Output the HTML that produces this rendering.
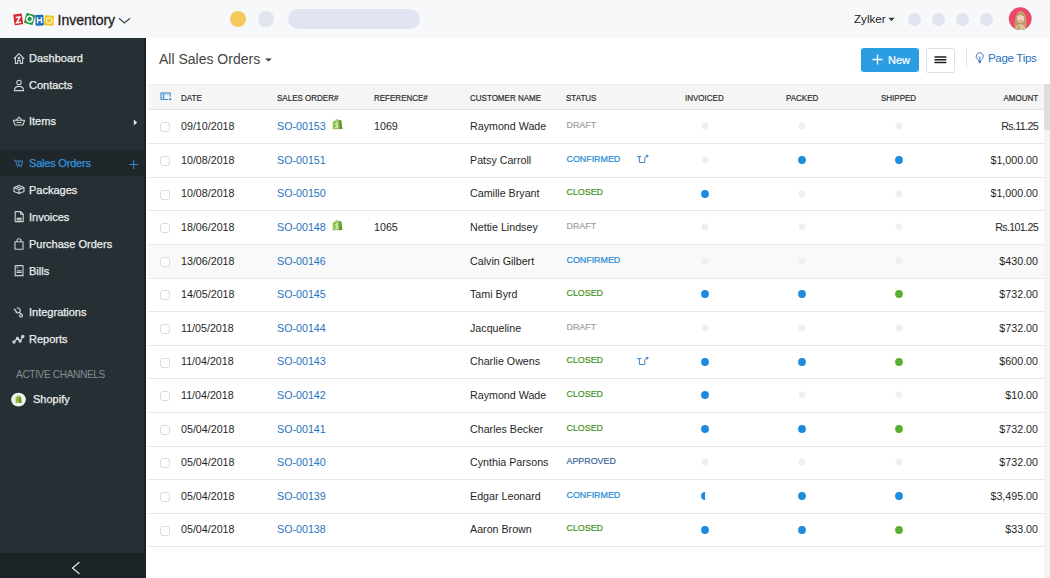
<!DOCTYPE html>
<html><head><meta charset="utf-8">
<style>
*{box-sizing:border-box;margin:0;padding:0}
html,body{width:1050px;height:578px;overflow:hidden;background:#fff;font-family:"Liberation Sans",sans-serif;color:#222}
.abs{position:absolute}
#top{position:absolute;left:0;top:0;width:1050px;height:38px;background:#f7f8fa}
#side{position:absolute;left:0;top:38px;width:146px;height:540px;background:#263034}
.nav{position:absolute;left:29px;font-size:11px;color:#eceef0;white-space:nowrap;line-height:13px;-webkit-text-stroke:0.25px #eceef0;transform:translateY(-0.1px)}
.hdr{position:absolute;top:84px;left:148px;width:897px;height:26px;background:#f5f5f6;border-top:1px solid #ececec;border-bottom:1px solid #e3e3e3}
.th{position:absolute;top:93px;font-size:8.8px;color:#2e2e2e;white-space:nowrap;line-height:10px;transform:scaleX(0.91);-webkit-text-stroke:0.2px #2e2e2e}
.row{position:absolute;left:148px;width:897px;height:33.6px;border-bottom:1px solid #e9e9e9}
.c{position:absolute;font-size:10.7px;white-space:nowrap;line-height:13px;color:#1f1f1f}
.lnk{color:#2773c0}
.st{font-size:8.9px;line-height:10px;-webkit-text-stroke:0.2px currentColor}
.dot{position:absolute;width:7.6px;height:7.6px;border-radius:50%}
.g{background:#f0f0f0;transform:scale(0.9)}
.b{background:#1a8cdb}
.gr{background:#5aae33}
.cb{position:absolute;left:160px;width:10px;height:10px;border:1px solid #dcdcdc;border-radius:3px;background:#fff}
</style></head><body>

<div id="top"></div>
<svg class="abs" style="left:0;top:0" width="60" height="32" viewBox="0 0 60 32">
 <g transform="rotate(-8 18.2 19.4)"><rect x="13.9" y="13.9" width="8.6" height="11" rx="0.8" fill="#d9262c"/><path d="M16 17.2 H20.2 L16.2 22.6 H20.5" fill="none" stroke="#fff" stroke-width="1.5"/></g>
 <g transform="rotate(15 29.6 19)"><rect x="25.1" y="13.8" width="9" height="10.4" rx="0.8" fill="#279a48"/><circle cx="29.6" cy="19" r="2.9" fill="none" stroke="#fff" stroke-width="1.4"/></g>
 <g transform="rotate(-3 39.5 20.2)"><rect x="35.4" y="14.8" width="8.2" height="10.8" rx="0.8" fill="#1f6fba"/><path d="M37.5 17.3 V23.2 M41.5 17.3 V23.2 M37.5 20.2 H41.5" fill="none" stroke="#fff" stroke-width="1.4"/></g>
 <g transform="rotate(4 49.1 20.5)"><rect x="44.5" y="15.5" width="9.2" height="10" rx="0.8" fill="#f2c01f"/><circle cx="49.1" cy="20.5" r="2.8" fill="none" stroke="#fbe9a6" stroke-width="1.4"/></g>
</svg>
<div class="abs" style="left:57.5px;top:11.7px;font-size:14px;color:#222;line-height:17px;-webkit-text-stroke:0.3px #222">Inventory</div>
<svg class="abs" style="left:118px;top:17px" width="13" height="8" viewBox="0 0 13 8"><path d="M1 1.2 L6.5 6 L12 1.2" fill="none" stroke="#444" stroke-width="1.2"/></svg>
<div class="abs" style="left:230px;top:11px;width:16px;height:16px;border-radius:50%;background:#f5c85c"></div>
<div class="abs" style="left:258px;top:11px;width:16px;height:16px;border-radius:50%;background:#e2e5ef"></div>
<div class="abs" style="left:288px;top:9px;width:132px;height:20px;border-radius:10px;background:#e1e5f1"></div>
<div class="abs" style="left:854px;top:12px;font-size:11.6px;color:#222;line-height:14px">Zylker</div>
<svg class="abs" style="left:888px;top:17px" width="7" height="5" viewBox="0 0 7 5"><path d="M0.5 0.8 H6.5 L3.5 4.2 Z" fill="#333"/></svg>
<div class="abs" style="left:907.5px;top:13px;width:13px;height:13px;border-radius:50%;background:#e1e4ee"></div>
<div class="abs" style="left:931.5px;top:13px;width:13px;height:13px;border-radius:50%;background:#e1e4ee"></div>
<div class="abs" style="left:955.5px;top:13px;width:13px;height:13px;border-radius:50%;background:#e1e4ee"></div>
<div class="abs" style="left:979.5px;top:13px;width:13px;height:13px;border-radius:50%;background:#e1e4ee"></div>
<svg class="abs" style="left:1008px;top:7px" width="24" height="24" viewBox="0 0 24 24">
 <defs><clipPath id="av"><circle cx="12.2" cy="11.7" r="11.4"/></clipPath></defs>
 <circle cx="12.2" cy="11.7" r="11.4" fill="#ec4869"/>
 <g clip-path="url(#av)">
  <path d="M6.5 24 C6 17 7 4.5 12.5 4 C18 4 19 12 18.5 18 L17 24 Z" fill="#c49a6c"/>
  <ellipse cx="12.6" cy="11" rx="3.5" ry="4.6" fill="#f0d3bf"/>
  <path d="M9.6 8.5 C10.5 6.8 14.5 6.3 16 9" fill="none" stroke="#b58a5c" stroke-width="1.2"/>
  <path d="M10.6 13.8 H14.2" stroke="#a86e5a" stroke-width="0.7"/>
  <path d="M7 24 C7.5 19 10 17.2 12.5 17.2 C15 17.2 17.5 19 18 24 Z" fill="#d9c29a"/>
  <path d="M8.5 24 L10.5 18.5 L12 21 Z" fill="#b79966"/>
 </g>
</svg>
<div class="abs" style="left:861px;top:48px;width:58px;height:24px;border-radius:3px;background:#2b9de3"></div>
<svg class="abs" style="left:872px;top:54px" width="11" height="11" viewBox="0 0 11 11"><path d="M5.5 0.5 V10.5 M0.5 5.5 H10.5" stroke="#fff" stroke-width="1.3"/></svg>
<div class="abs" style="left:888px;top:52.5px;font-size:11px;color:#fff;line-height:14px;-webkit-text-stroke:0.2px #fff">New</div>
<div class="abs" style="left:925.5px;top:48px;width:29.5px;height:24.5px;border-radius:2px;background:#fff;border:1px solid #e0e0e0"></div>
<svg class="abs" style="left:934px;top:55px" width="13" height="10" viewBox="0 0 13 10"><path d="M1 1.9 H11.8 M1 4.8 H11.8 M1 7.6 H11.8" stroke="#1c1c1c" stroke-width="1.5" stroke-linecap="round"/></svg>
<div class="abs" style="left:966px;top:48px;width:1px;height:19px;background:#e2e2e2"></div>
<svg class="abs" style="left:970px;top:48px" width="20" height="20" viewBox="970 48 20 20" fill="none" stroke="#4677bd" stroke-width="1"><path d="M978.1 60.2 C977.6 59 976.2 58.3 976.2 56.3 C976.2 54.2 977.8 52.8 979.7 52.8 C981.6 52.8 983.2 54.2 983.2 56.3 C983.2 58.3 981.8 59 981.3 60.2 Z"/><path d="M978.4 61.6 H981 M978.8 62.7 H980.6" stroke-width="1.1"/><path d="M978.6 56.6 L979.7 58 L980.8 56.6 M979.7 58 V60" stroke-width="0.8"/></svg>
<div class="abs" style="left:988px;top:51px;font-size:11.5px;color:#2a73bb;line-height:14px;letter-spacing:-0.3px">Page Tips</div>
<div class="abs" style="left:159px;top:50.6px;font-size:14px;color:#454545;line-height:17px">All Sales Orders</div>
<svg class="abs" style="left:265px;top:58px" width="7" height="4" viewBox="0 0 7 4"><path d="M0.3 0.5 H6.7 L3.5 3.6 Z" fill="#333"/></svg>

<div id="side"></div>
<div class="abs" style="left:144px;top:38px;width:2px;height:540px;background:#1b2225"></div>
<div class="abs" style="left:0;top:150px;width:146px;height:26px;background:#1f272b"></div>
<div class="abs" style="left:0;top:553px;width:146px;height:25px;background:#1c2327"></div>
<svg class="abs" style="left:0;top:38px" width="146" height="540" viewBox="0 38 146 540" fill="none" stroke="#cdd1d4" stroke-width="1.1" stroke-linejoin="round" stroke-linecap="round">
 <!-- home -->
 <path d="M14.2 58.5 L19 53.6 L23.8 58.5 M15.4 57.5 V63.4 H17.7 V60.4 H20.3 V63.4 H22.6 V57.5"/>
 <circle cx="19" cy="58" r="0.8"/>
 <!-- contacts -->
 <circle cx="19" cy="82.5" r="2.2"/>
 <path d="M14.4 90.6 C14.4 88 16.4 86.4 19 86.4 C21.6 86.4 23.6 88 23.6 90.6 Z"/>
 <!-- items basket -->
 <path d="M16 120.3 L19 117.2 L22 120.3"/>
 <path d="M13.4 120.3 H24.6 L23 125 H15 Z"/>
 <path d="M17 122.5 H21"/>
 <!-- packages box -->
 <path d="M19 185.4 L24 187.6 V191.4 L19 193.6 L14 191.4 V187.6 Z M14 187.6 L19 189.8 L24 187.6 M19 189.8 V193.6 M16.5 186.5 L21.5 188.7"/>
 <!-- invoices -->
 <path d="M15.2 211.6 H20.6 L23.2 214.2 V221.6 H15.2 Z M20.6 211.6 V214.2 H23.2"/>
 <path d="M17 218.3 H21.3 M17 219.8 H21.3" stroke-width="1.2"/>
 <!-- purchase bag -->
 <path d="M15 241.8 H23 V249.3 H15 Z M17 241.8 V240 C17 238.3 21 238.3 21 240 V241.8"/>
 <!-- bills -->
 <path d="M15.2 265.6 H23 V276 L21.7 275.2 L20.4 276 L19.1 275.2 L17.8 276 L16.5 275.2 L15.2 276 Z"/>
 <path d="M17 267.8 H18 M17 270.7 H21.2 M17 272.4 H21.2"/>
 <!-- integrations -->
 <path d="M14.4 309.3 L16.5 311.7" stroke-width="1.3"/>
 <path d="M17.2 307.8 C19.3 308 20.7 309.6 20.1 311.3 C19.6 312.9 17.2 313.4 16 312" stroke-width="1.2"/>
 <path d="M19.3 312.6 C21 313.4 22.7 314.3 22.5 315.9 C22.3 317.2 20.5 317.3 19.8 316.3 C19.4 315.7 19.6 315.2 20 315" stroke-width="1.2"/>
 <!-- reports -->
 <path d="M14 342 L17.4 338.3 L20.1 341 L22.8 336.6" stroke-width="1.2"/>
 <circle cx="14" cy="342" r="1.1" fill="#d9dcdf"/><circle cx="17.4" cy="338.3" r="1.1" fill="#d9dcdf"/><circle cx="20.1" cy="341" r="1.1" fill="#d9dcdf"/><circle cx="22.8" cy="336.6" r="1.2" fill="#d9dcdf"/>
 <!-- collapse arrow -->
 <path d="M79 562.5 L72.5 568 L79 573.5" stroke="#e6e8ea" stroke-width="1.2"/>
</svg>
<svg class="abs" style="left:13px;top:159px" width="11" height="9" viewBox="0 0 11 9" fill="none" stroke="#3b84c6" stroke-width="1" stroke-linejoin="round" stroke-linecap="round">
 <path d="M0.8 0.9 L2.6 2 L4.2 6.6 H8.4 L9.6 2 H2.6 M5.6 2.2 L6 6.4 M4.5 7.5 V7.9 M8 7.5 V7.9"/>
</svg>
<div class="nav" style="top:52px">Dashboard</div>
<div class="nav" style="top:79px">Contacts</div>
<div class="nav" style="top:115px">Items</div>
<svg class="abs" style="left:133px;top:119px" width="5" height="7" viewBox="0 0 5 7"><path d="M0.8 0.6 L4.2 3.5 L0.8 6.4 Z" fill="#e0e2e4"/></svg>
<div class="nav" style="top:157px;color:#3294de;-webkit-text-stroke:0.25px #3294de;letter-spacing:-0.2px">Sales Orders</div>
<svg class="abs" style="left:128.5px;top:160px" width="10" height="9" viewBox="0 0 10 9"><path d="M4.7 0 V9 M0.2 4.5 H9.2" stroke="#3a93dc" stroke-width="0.9"/></svg>
<div class="nav" style="top:184px">Packages</div>
<div class="nav" style="top:211px">Invoices</div>
<div class="nav" style="top:238px">Purchase Orders</div>
<div class="nav" style="top:265px">Bills</div>
<div class="nav" style="top:306px">Integrations</div>
<div class="nav" style="top:333px">Reports</div>
<div class="abs" style="left:16px;top:368.5px;font-size:10.1px;color:#868b90;line-height:12px;white-space:nowrap;letter-spacing:-0.35px">ACTIVE CHANNELS</div>
<svg class="abs" style="left:10px;top:392px" width="17" height="16" viewBox="0 0 17 16">
 <ellipse cx="8.5" cy="7.6" rx="7.4" ry="6.9" fill="#eef3ea"/>
 <path d="M5.6 5 L10.8 4.6 L11.6 10.8 L5.8 11 Z" fill="#93b541"/>
 <path d="M9 4.8 L10.8 4.6 L11.6 10.8 L9.4 10.9 Z" fill="#6f9330"/>
 <path d="M7 4.9 C7 3.4 9.3 3.2 9.4 4.7" fill="none" stroke="#8aa844" stroke-width="0.8"/>
</svg>
<div class="nav" style="left:33px;top:393.3px">Shopify</div>

<div class="hdr"></div>
<svg class="abs" style="left:157px;top:88px" width="18" height="16" viewBox="157 88 18 16"><rect x="160.6" y="92.6" width="9.8" height="7" fill="#c2dbf2"/><rect x="164.4" y="95.4" width="5.2" height="3.4" fill="#f4f8fc"/><path d="M160.9 92.8 V99.5 H168.2 M163.7 93.2 V99.3 M160.9 92.9 H170.3 V96.8" fill="none" stroke="#4d8cc8" stroke-width="1"/><circle cx="170.2" cy="99.2" r="1" fill="#3f6f9c"/></svg>
<div class="th" style="left:181px;transform-origin:0 0">DATE</div>
<div class="th" style="left:277px;transform-origin:0 0">SALES ORDER#</div>
<div class="th" style="left:374px;transform-origin:0 0">REFERENCE#</div>
<div class="th" style="left:470px;transform-origin:0 0">CUSTOMER NAME</div>
<div class="th" style="left:566px;transform-origin:0 0">STATUS</div>
<div class="th" style="left:685px;transform-origin:0 0">INVOICED</div>
<div class="th" style="left:786px;transform-origin:0 0">PACKED</div>
<div class="th" style="left:881px;transform-origin:0 0">SHIPPED</div>
<div class="th" style="right:12px;transform-origin:100% 0">AMOUNT</div>
<div class="row" style="top:110.60px;"></div>
<div class="cb" style="top:122.40px"></div>
<div class="c" style="left:181px;top:120.20px">09/10/2018</div>
<div class="c lnk" style="left:277px;top:120.20px">SO-00153</div>
<svg class="abs" style="left:331.5px;top:118.80px" width="11" height="11" viewBox="0 0 11 11"><path d="M0.8 3.2 C0.8 1.9 2 1.5 3 1.4 L7.4 0.9 C8.6 0.9 9.2 1.4 9.4 2.4 L10.4 10 L0.7 10.3 Z" fill="#93c24f"/><path d="M7 1 L7.4 0.9 C8.6 0.9 9.2 1.4 9.4 2.4 L10.4 10 L7.3 10.2 Z" fill="#5f9c37"/><path d="M3.7 0.9 C4.4 0.1 5.6 0.1 6.2 1" fill="none" stroke="#7aa84a" stroke-width="0.8"/><path d="M6 4.1 C5 3.6 3.6 4 3.9 5.1 C4.2 6 5.9 6.2 5.6 7.6 C5.3 8.6 4 8.6 3.3 8.1" fill="none" stroke="#e9f5d8" stroke-width="1.1"/></svg>
<div class="c" style="left:374px;top:120.20px">1069</div>
<div class="c" style="left:470px;top:120.20px">Raymond Wade</div>
<div class="c st" style="left:566.5px;top:120.10px;color:#a0a0a0">DRAFT</div>
<svg class="abs" style="left:700.00px;top:121.40px" width="10" height="10" viewBox="0 0 10 10"><circle cx="5" cy="5" r="3.4" fill="#efefef"/></svg>
<svg class="abs" style="left:796.80px;top:121.40px" width="10" height="10" viewBox="0 0 10 10"><circle cx="5" cy="5" r="3.4" fill="#efefef"/></svg>
<svg class="abs" style="left:893.80px;top:121.40px" width="10" height="10" viewBox="0 0 10 10"><circle cx="5" cy="5" r="3.4" fill="#efefef"/></svg>
<div class="c" style="right:12px;top:120.20px;letter-spacing:-0.65px">Rs.11.25</div>
<div class="row" style="top:144.20px;"></div>
<div class="cb" style="top:156.00px"></div>
<div class="c" style="left:181px;top:153.80px">10/08/2018</div>
<div class="c lnk" style="left:277px;top:153.80px">SO-00151</div>
<div class="c" style="left:470px;top:153.80px">Patsy Carroll</div>
<div class="c st" style="left:566.5px;top:153.70px;color:#1f8bd6">CONFIRMED</div>
<svg class="abs" style="left:636px;top:154.20px" width="14" height="10" viewBox="0 0 14 10"><path d="M1 2.6 H5.4 M3.4 2.6 V8.5 H8.8 V4.6 C8.8 3.2 9.6 2.4 10.8 2.1" fill="none" stroke="#3f82c2" stroke-width="1"/><path d="M10 0.5 L12.9 1.4 L10.9 3.9 Z" fill="#3f82c2"/></svg>
<svg class="abs" style="left:700.00px;top:155.00px" width="10" height="10" viewBox="0 0 10 10"><circle cx="5" cy="5" r="3.4" fill="#efefef"/></svg>
<svg class="abs" style="left:796.80px;top:155.00px" width="10" height="10" viewBox="0 0 10 10"><circle cx="5" cy="5" r="3.9" fill="#1a8cdb"/></svg>
<svg class="abs" style="left:893.80px;top:155.00px" width="10" height="10" viewBox="0 0 10 10"><circle cx="5" cy="5" r="3.9" fill="#1a8cdb"/></svg>
<div class="c" style="right:12px;top:153.80px;">$1,000.00</div>
<div class="row" style="top:177.80px;"></div>
<div class="cb" style="top:189.60px"></div>
<div class="c" style="left:181px;top:187.40px">10/08/2018</div>
<div class="c lnk" style="left:277px;top:187.40px">SO-00150</div>
<div class="c" style="left:470px;top:187.40px">Camille Bryant</div>
<div class="c st" style="left:566.5px;top:187.30px;color:#459428">CLOSED</div>
<svg class="abs" style="left:700.00px;top:188.60px" width="10" height="10" viewBox="0 0 10 10"><circle cx="5" cy="5" r="3.9" fill="#1a8cdb"/></svg>
<svg class="abs" style="left:796.80px;top:188.60px" width="10" height="10" viewBox="0 0 10 10"><circle cx="5" cy="5" r="3.4" fill="#efefef"/></svg>
<svg class="abs" style="left:893.80px;top:188.60px" width="10" height="10" viewBox="0 0 10 10"><circle cx="5" cy="5" r="3.4" fill="#efefef"/></svg>
<div class="c" style="right:12px;top:187.40px;">$1,000.00</div>
<div class="row" style="top:211.40px;"></div>
<div class="cb" style="top:223.20px"></div>
<div class="c" style="left:181px;top:221.00px">18/06/2018</div>
<div class="c lnk" style="left:277px;top:221.00px">SO-00148</div>
<svg class="abs" style="left:331.5px;top:219.60px" width="11" height="11" viewBox="0 0 11 11"><path d="M0.8 3.2 C0.8 1.9 2 1.5 3 1.4 L7.4 0.9 C8.6 0.9 9.2 1.4 9.4 2.4 L10.4 10 L0.7 10.3 Z" fill="#93c24f"/><path d="M7 1 L7.4 0.9 C8.6 0.9 9.2 1.4 9.4 2.4 L10.4 10 L7.3 10.2 Z" fill="#5f9c37"/><path d="M3.7 0.9 C4.4 0.1 5.6 0.1 6.2 1" fill="none" stroke="#7aa84a" stroke-width="0.8"/><path d="M6 4.1 C5 3.6 3.6 4 3.9 5.1 C4.2 6 5.9 6.2 5.6 7.6 C5.3 8.6 4 8.6 3.3 8.1" fill="none" stroke="#e9f5d8" stroke-width="1.1"/></svg>
<div class="c" style="left:374px;top:221.00px">1065</div>
<div class="c" style="left:470px;top:221.00px">Nettie Lindsey</div>
<div class="c st" style="left:566.5px;top:220.90px;color:#a0a0a0">DRAFT</div>
<svg class="abs" style="left:700.00px;top:222.20px" width="10" height="10" viewBox="0 0 10 10"><circle cx="5" cy="5" r="3.4" fill="#efefef"/></svg>
<svg class="abs" style="left:796.80px;top:222.20px" width="10" height="10" viewBox="0 0 10 10"><circle cx="5" cy="5" r="3.4" fill="#efefef"/></svg>
<svg class="abs" style="left:893.80px;top:222.20px" width="10" height="10" viewBox="0 0 10 10"><circle cx="5" cy="5" r="3.4" fill="#efefef"/></svg>
<div class="c" style="right:12px;top:221.00px;letter-spacing:-0.65px">Rs.101.25</div>
<div class="row" style="top:245.00px;background:#f9f9f9;"></div>
<div class="cb" style="top:256.80px"></div>
<div class="c" style="left:181px;top:254.60px">13/06/2018</div>
<div class="c lnk" style="left:277px;top:254.60px">SO-00146</div>
<div class="c" style="left:470px;top:254.60px">Calvin Gilbert</div>
<div class="c st" style="left:566.5px;top:254.50px;color:#1f8bd6">CONFIRMED</div>
<svg class="abs" style="left:700.00px;top:255.80px" width="10" height="10" viewBox="0 0 10 10"><circle cx="5" cy="5" r="3.4" fill="#efefef"/></svg>
<svg class="abs" style="left:796.80px;top:255.80px" width="10" height="10" viewBox="0 0 10 10"><circle cx="5" cy="5" r="3.4" fill="#efefef"/></svg>
<svg class="abs" style="left:893.80px;top:255.80px" width="10" height="10" viewBox="0 0 10 10"><circle cx="5" cy="5" r="3.4" fill="#efefef"/></svg>
<div class="c" style="right:12px;top:254.60px;">$430.00</div>
<div class="row" style="top:278.60px;"></div>
<div class="cb" style="top:290.40px"></div>
<div class="c" style="left:181px;top:288.20px">14/05/2018</div>
<div class="c lnk" style="left:277px;top:288.20px">SO-00145</div>
<div class="c" style="left:470px;top:288.20px">Tami Byrd</div>
<div class="c st" style="left:566.5px;top:288.10px;color:#459428">CLOSED</div>
<svg class="abs" style="left:700.00px;top:289.40px" width="10" height="10" viewBox="0 0 10 10"><circle cx="5" cy="5" r="3.9" fill="#1a8cdb"/></svg>
<svg class="abs" style="left:796.80px;top:289.40px" width="10" height="10" viewBox="0 0 10 10"><circle cx="5" cy="5" r="3.9" fill="#1a8cdb"/></svg>
<svg class="abs" style="left:893.80px;top:289.40px" width="10" height="10" viewBox="0 0 10 10"><circle cx="5" cy="5" r="3.9" fill="#5aae33"/></svg>
<div class="c" style="right:12px;top:288.20px;">$732.00</div>
<div class="row" style="top:312.20px;"></div>
<div class="cb" style="top:324.00px"></div>
<div class="c" style="left:181px;top:321.80px">11/05/2018</div>
<div class="c lnk" style="left:277px;top:321.80px">SO-00144</div>
<div class="c" style="left:470px;top:321.80px">Jacqueline</div>
<div class="c st" style="left:566.5px;top:321.70px;color:#a0a0a0">DRAFT</div>
<svg class="abs" style="left:700.00px;top:323.00px" width="10" height="10" viewBox="0 0 10 10"><circle cx="5" cy="5" r="3.4" fill="#efefef"/></svg>
<svg class="abs" style="left:796.80px;top:323.00px" width="10" height="10" viewBox="0 0 10 10"><circle cx="5" cy="5" r="3.4" fill="#efefef"/></svg>
<svg class="abs" style="left:893.80px;top:323.00px" width="10" height="10" viewBox="0 0 10 10"><circle cx="5" cy="5" r="3.4" fill="#efefef"/></svg>
<div class="c" style="right:12px;top:321.80px;">$732.00</div>
<div class="row" style="top:345.80px;"></div>
<div class="cb" style="top:357.60px"></div>
<div class="c" style="left:181px;top:355.40px">11/04/2018</div>
<div class="c lnk" style="left:277px;top:355.40px">SO-00143</div>
<div class="c" style="left:470px;top:355.40px">Charlie Owens</div>
<div class="c st" style="left:566.5px;top:355.30px;color:#459428">CLOSED</div>
<svg class="abs" style="left:636px;top:355.80px" width="14" height="10" viewBox="0 0 14 10"><path d="M1 2.6 H5.4 M3.4 2.6 V8.5 H8.8 V4.6 C8.8 3.2 9.6 2.4 10.8 2.1" fill="none" stroke="#3f82c2" stroke-width="1"/><path d="M10 0.5 L12.9 1.4 L10.9 3.9 Z" fill="#3f82c2"/></svg>
<svg class="abs" style="left:700.00px;top:356.60px" width="10" height="10" viewBox="0 0 10 10"><circle cx="5" cy="5" r="3.9" fill="#1a8cdb"/></svg>
<svg class="abs" style="left:796.80px;top:356.60px" width="10" height="10" viewBox="0 0 10 10"><circle cx="5" cy="5" r="3.9" fill="#1a8cdb"/></svg>
<svg class="abs" style="left:893.80px;top:356.60px" width="10" height="10" viewBox="0 0 10 10"><circle cx="5" cy="5" r="3.9" fill="#5aae33"/></svg>
<div class="c" style="right:12px;top:355.40px;">$600.00</div>
<div class="row" style="top:379.40px;"></div>
<div class="cb" style="top:391.20px"></div>
<div class="c" style="left:181px;top:389.00px">11/04/2018</div>
<div class="c lnk" style="left:277px;top:389.00px">SO-00142</div>
<div class="c" style="left:470px;top:389.00px">Raymond Wade</div>
<div class="c st" style="left:566.5px;top:388.90px;color:#459428">CLOSED</div>
<svg class="abs" style="left:700.00px;top:390.20px" width="10" height="10" viewBox="0 0 10 10"><circle cx="5" cy="5" r="3.9" fill="#1a8cdb"/></svg>
<svg class="abs" style="left:796.80px;top:390.20px" width="10" height="10" viewBox="0 0 10 10"><circle cx="5" cy="5" r="3.4" fill="#efefef"/></svg>
<svg class="abs" style="left:893.80px;top:390.20px" width="10" height="10" viewBox="0 0 10 10"><circle cx="5" cy="5" r="3.4" fill="#efefef"/></svg>
<div class="c" style="right:12px;top:389.00px;">$10.00</div>
<div class="row" style="top:413.00px;"></div>
<div class="cb" style="top:424.80px"></div>
<div class="c" style="left:181px;top:422.60px">05/04/2018</div>
<div class="c lnk" style="left:277px;top:422.60px">SO-00141</div>
<div class="c" style="left:470px;top:422.60px">Charles Becker</div>
<div class="c st" style="left:566.5px;top:422.50px;color:#459428">CLOSED</div>
<svg class="abs" style="left:700.00px;top:423.80px" width="10" height="10" viewBox="0 0 10 10"><circle cx="5" cy="5" r="3.9" fill="#1a8cdb"/></svg>
<svg class="abs" style="left:796.80px;top:423.80px" width="10" height="10" viewBox="0 0 10 10"><circle cx="5" cy="5" r="3.9" fill="#1a8cdb"/></svg>
<svg class="abs" style="left:893.80px;top:423.80px" width="10" height="10" viewBox="0 0 10 10"><circle cx="5" cy="5" r="3.9" fill="#5aae33"/></svg>
<div class="c" style="right:12px;top:422.60px;">$732.00</div>
<div class="row" style="top:446.60px;"></div>
<div class="cb" style="top:458.40px"></div>
<div class="c" style="left:181px;top:456.20px">05/04/2018</div>
<div class="c lnk" style="left:277px;top:456.20px">SO-00140</div>
<div class="c" style="left:470px;top:456.20px">Cynthia Parsons</div>
<div class="c st" style="left:566.5px;top:456.10px;color:#3a6699">APPROVED</div>
<svg class="abs" style="left:700.00px;top:457.40px" width="10" height="10" viewBox="0 0 10 10"><circle cx="5" cy="5" r="3.4" fill="#efefef"/></svg>
<svg class="abs" style="left:796.80px;top:457.40px" width="10" height="10" viewBox="0 0 10 10"><circle cx="5" cy="5" r="3.4" fill="#efefef"/></svg>
<svg class="abs" style="left:893.80px;top:457.40px" width="10" height="10" viewBox="0 0 10 10"><circle cx="5" cy="5" r="3.4" fill="#efefef"/></svg>
<div class="c" style="right:12px;top:456.20px;">$732.00</div>
<div class="row" style="top:480.20px;"></div>
<div class="cb" style="top:492.00px"></div>
<div class="c" style="left:181px;top:489.80px">05/04/2018</div>
<div class="c lnk" style="left:277px;top:489.80px">SO-00139</div>
<div class="c" style="left:470px;top:489.80px">Edgar Leonard</div>
<div class="c st" style="left:566.5px;top:489.70px;color:#1f8bd6">CONFIRMED</div>
<svg class="abs" style="left:700.00px;top:491.00px" width="10" height="10" viewBox="0 0 10 10"><path d="M5 1.1 A3.9 3.9 0 0 0 5 8.9 Z" fill="#1b8ad6"/><path d="M5 1.1 A3.9 3.9 0 0 1 5 8.9 Z" fill="#f5f7fa"/></svg>
<svg class="abs" style="left:796.80px;top:491.00px" width="10" height="10" viewBox="0 0 10 10"><circle cx="5" cy="5" r="3.9" fill="#1a8cdb"/></svg>
<svg class="abs" style="left:893.80px;top:491.00px" width="10" height="10" viewBox="0 0 10 10"><circle cx="5" cy="5" r="3.9" fill="#1a8cdb"/></svg>
<div class="c" style="right:12px;top:489.80px;">$3,495.00</div>
<div class="row" style="top:513.80px;"></div>
<div class="cb" style="top:525.60px"></div>
<div class="c" style="left:181px;top:523.40px">05/04/2018</div>
<div class="c lnk" style="left:277px;top:523.40px">SO-00138</div>
<div class="c" style="left:470px;top:523.40px">Aaron Brown</div>
<div class="c st" style="left:566.5px;top:523.30px;color:#459428">CLOSED</div>
<svg class="abs" style="left:700.00px;top:524.60px" width="10" height="10" viewBox="0 0 10 10"><circle cx="5" cy="5" r="3.9" fill="#1a8cdb"/></svg>
<svg class="abs" style="left:796.80px;top:524.60px" width="10" height="10" viewBox="0 0 10 10"><circle cx="5" cy="5" r="3.9" fill="#1a8cdb"/></svg>
<svg class="abs" style="left:893.80px;top:524.60px" width="10" height="10" viewBox="0 0 10 10"><circle cx="5" cy="5" r="3.9" fill="#5aae33"/></svg>
<div class="c" style="right:12px;top:523.40px;">$33.00</div>
<div class="abs" style="left:1044px;top:84px;width:6px;height:494px;background:#f4f4f4"></div>
<div class="abs" style="left:1044px;top:84px;width:6px;height:46px;background:#dedede"></div>
</body></html>
